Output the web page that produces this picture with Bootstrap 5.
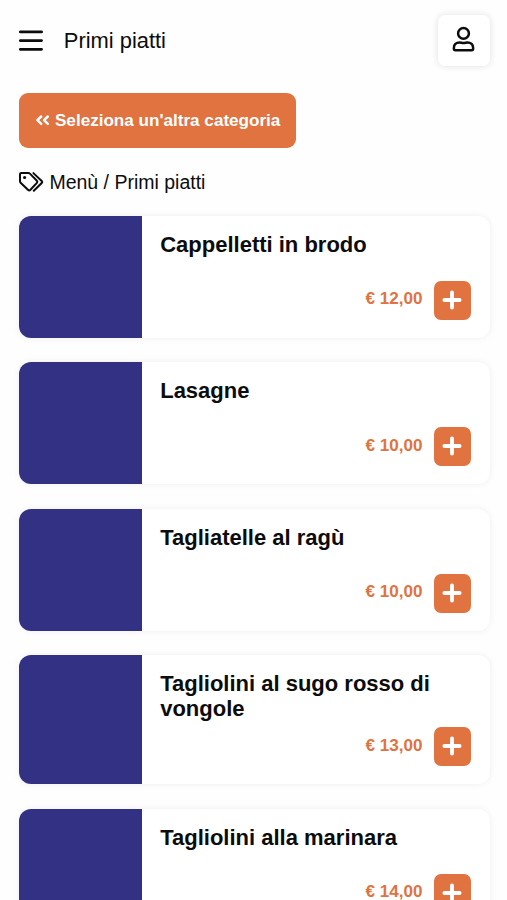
<!DOCTYPE html>
<html lang="it">
<head>
<meta charset="utf-8">
<meta name="viewport" content="width=device-width, initial-scale=1">
<title>Primi piatti</title>
<link href="https://cdn.jsdelivr.net/npm/bootstrap@5.3.0/dist/css/bootstrap.min.css" rel="stylesheet">
<style>
  body { font-family: "Liberation Sans", Arial, sans-serif; color: #0c0c0c; background: #fefefe; height: 900px; overflow: hidden; }
  .page { padding: 14.5px 17.5px 0 19.4px; }
  .topbar { height: 51.5px; }
  .menu-btn { width: 24px; height: 24px; }
  .page-title { font-size: 21.9px; line-height: 26px; margin-left: 20.4px; padding-top: 2px; font-weight: 400; }
  .user-btn { width: 51.5px; height: 51.5px; border-radius: 7px; box-shadow: 0 0 7px rgba(0,0,0,.12); }
  .back-btn { width: 276.6px; height: 55.5px; margin-top: 26.8px; border-radius: 9px; background: #e07340; color: #fff; font-size: 17.1px; font-weight: 700; }
  .back-btn:hover { background: #cf6532; color: #fff; }
  .crumbs { font-size: 19.5px; height: 28px; margin-top: 19.7px; line-height: 28px; }
  .crumb-text { margin-left: 5px; }
  .dishes { margin-top: 20px; gap: 24.5px; }
  .dish { min-height: 122px; border-radius: 12px; box-shadow: 0 0 7px rgba(0,0,0,.065); }
  .dish-photo { width: 122.3px; background: #333184; border-radius: 12px 0 0 12px; }
  .dish-body { padding: 17px 18.5px 18px 18.5px; }
  .dish-name { font-size: 22px; line-height: 24.5px; font-weight: 700; margin: 0; }
  .dish-foot { gap: 11px; margin-top: 6px; }
  .price { color: #e07340; font-size: 17.1px; font-weight: 700; line-height: 20px; margin-top: -2px; }
  .add-btn { width: 37.5px; height: 39px; border-radius: 7px; background: #e07340; }
  .add-btn svg { margin-top: -1px; }
  .add-btn:hover { background: #cf6532; }
</style>
</head>
<body>
<div class="page">
  <header class="topbar d-flex align-items-center">
    <button class="btn p-0 border-0 menu-btn d-flex" aria-label="Menu">
      <svg width="24" height="24" viewBox="0 0 24 24" fill="none" stroke="#0c0c0c" stroke-width="2.7" stroke-linecap="round"><path d="M1.300 3.900h21.300M1.300 12.600h21.300M1.300 21.300h21.300"/></svg>
    </button>
    <h1 class="page-title mb-0">Primi piatti</h1>
    <button class="btn p-0 border-0 bg-white user-btn ms-auto d-flex align-items-center justify-content-center" aria-label="Profilo">
      <svg width="24" height="28" viewBox="0 0 24 28" fill="none" stroke="#0c0c0c" stroke-width="2.500" stroke-linejoin="round"><circle cx="11.500" cy="7.400" r="5.400"/><path d="M7.500 16.400c1.600 0 2.200.7 4 .7s2.400-.7 4-.7c3.500 0 5.600 2.300 5.600 5.300v1q0 1.500-1.500 1.500H3.400q-1.500 0-1.500-1.500v-1c0-3 2.100-5.300 5.600-5.300z"/></svg>
    </button>
  </header>

  <a href="#" class="btn border-0 p-0 back-btn d-flex align-items-center justify-content-center">
    <svg class="me-1" width="16" height="14" viewBox="0 0 16 14" fill="none" stroke="#fff" stroke-width="2.500" stroke-linecap="round" stroke-linejoin="round"><path d="M6.200 2.500 2.400 6.200l3.800 3.700M12.800 2.500 9 6.200l3.800 3.700"/></svg>
    <span>Seleziona un'altra categoria</span>
  </a>

  <nav class="crumbs d-flex align-items-center" aria-label="Percorso">
    <svg width="25" height="20" viewBox="0 0 25 20" fill="none" stroke="#0c0c0c" stroke-width="2" stroke-linecap="round" stroke-linejoin="round"><path d="M1 2.300Q1 1 2.300 1h7.200q.8 0 1.400.6l7 7.100q1 1.100 0 2.200l-6.700 7.100q-1 1-2 0L1.600 10.700Q1 10.100 1 9.200z"/><path d="m14.400 1.100 8.300 7.900q1 1 0 2l-7.900 7.800"/><circle cx="5.600" cy="5.500" r="1.600" fill="#0c0c0c" stroke="none"/></svg>
    <span class="crumb-text">Menù / Primi piatti</span>
  </nav>

  <main class="dishes d-flex flex-column">
    <article class="dish d-flex bg-white">
      <div class="dish-photo flex-shrink-0"></div>
      <div class="dish-body flex-grow-1 d-flex flex-column justify-content-between">
        <h2 class="dish-name">Cappelletti in brodo</h2>
        <div class="dish-foot d-flex align-items-center justify-content-end"><span class="price">€ 12,00</span>
          <button class="btn p-0 border-0 add-btn d-flex align-items-center justify-content-center" aria-label="Aggiungi"><svg width="20" height="20" viewBox="0 0 20 20" stroke="#fff" stroke-width="3.900" stroke-linecap="round"><path d="M10 2.400v15.200M2.400 10h15.200"/></svg></button></div>
      </div>
    </article>
    <article class="dish d-flex bg-white">
      <div class="dish-photo flex-shrink-0"></div>
      <div class="dish-body flex-grow-1 d-flex flex-column justify-content-between">
        <h2 class="dish-name">Lasagne</h2>
        <div class="dish-foot d-flex align-items-center justify-content-end"><span class="price">€ 10,00</span>
          <button class="btn p-0 border-0 add-btn d-flex align-items-center justify-content-center" aria-label="Aggiungi"><svg width="20" height="20" viewBox="0 0 20 20" stroke="#fff" stroke-width="3.900" stroke-linecap="round"><path d="M10 2.400v15.200M2.400 10h15.200"/></svg></button></div>
      </div>
    </article>
    <article class="dish d-flex bg-white">
      <div class="dish-photo flex-shrink-0"></div>
      <div class="dish-body flex-grow-1 d-flex flex-column justify-content-between">
        <h2 class="dish-name">Tagliatelle al ragù</h2>
        <div class="dish-foot d-flex align-items-center justify-content-end"><span class="price">€ 10,00</span>
          <button class="btn p-0 border-0 add-btn d-flex align-items-center justify-content-center" aria-label="Aggiungi"><svg width="20" height="20" viewBox="0 0 20 20" stroke="#fff" stroke-width="3.900" stroke-linecap="round"><path d="M10 2.400v15.200M2.400 10h15.200"/></svg></button></div>
      </div>
    </article>
    <article class="dish d-flex bg-white">
      <div class="dish-photo flex-shrink-0"></div>
      <div class="dish-body flex-grow-1 d-flex flex-column justify-content-between">
        <h2 class="dish-name">Tagliolini al sugo rosso di vongole</h2>
        <div class="dish-foot d-flex align-items-center justify-content-end"><span class="price">€ 13,00</span>
          <button class="btn p-0 border-0 add-btn d-flex align-items-center justify-content-center" aria-label="Aggiungi"><svg width="20" height="20" viewBox="0 0 20 20" stroke="#fff" stroke-width="3.900" stroke-linecap="round"><path d="M10 2.400v15.200M2.400 10h15.200"/></svg></button></div>
      </div>
    </article>
    <article class="dish d-flex bg-white">
      <div class="dish-photo flex-shrink-0"></div>
      <div class="dish-body flex-grow-1 d-flex flex-column justify-content-between">
        <h2 class="dish-name">Tagliolini alla marinara</h2>
        <div class="dish-foot d-flex align-items-center justify-content-end"><span class="price">€ 14,00</span>
          <button class="btn p-0 border-0 add-btn d-flex align-items-center justify-content-center" aria-label="Aggiungi"><svg width="20" height="20" viewBox="0 0 20 20" stroke="#fff" stroke-width="3.900" stroke-linecap="round"><path d="M10 2.400v15.200M2.400 10h15.200"/></svg></button></div>
      </div>
    </article>
  </main>
</div>
<script src="https://cdn.jsdelivr.net/npm/bootstrap@5.3.0/dist/js/bootstrap.bundle.min.js"></script>
</body>
</html>
